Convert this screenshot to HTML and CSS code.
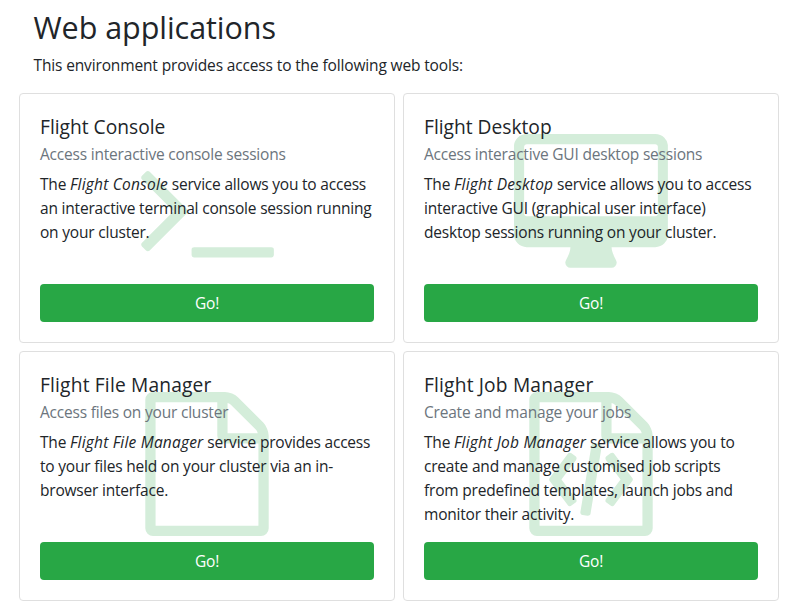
FILE: index.html
```html
<!DOCTYPE html>
<html lang="en">
<head>
<meta charset="utf-8">
<title>Web applications</title>
<link rel="stylesheet" href="styles.css">
</head>
<body>
<main class="page">
  <header class="intro">
    <h2 class="title">Web applications</h2>
    <p class="lead">This environment provides access to the following web tools:</p>
  </header>
  <div class="deck">
    <section class="card">
      <svg class="icon" viewBox="-64 0 1920 1792" aria-hidden="true"><path d="M649 983l-466 466q-10 10-23 10t-23-10l-50-50q-10-10-10-23t10-23l393-393-393-393q-10-10-10-23t10-23l50-50q10-10 23-10t23 10l466 466q10 10 10 23t-10 23zm1079 457v64q0 14-9 23t-23 9h-960q-14 0-23-9t-9-23v-64q0-14 9-23t23-9h960q14 0 23 9t9 23z"/></svg>
      <h5 class="name">Flight Console</h5>
      <h6 class="subtitle">Access interactive console sessions</h6>
      <p class="text">The <em>Flight Console</em> service allows you to access<br>an interactive terminal console session running<br>on your cluster.</p>
      <a class="btn">Go!</a>
    </section>
    <section class="card">
      <svg class="icon" viewBox="-64 0 1920 1792" aria-hidden="true"><path d="M1728 992v-832q0-13-9.500-22.500t-22.500-9.500h-1600q-13 0-22.500 9.500t-9.500 22.500v832q0 13 9.500 22.500t22.500 9.500h1600q13 0 22.500-9.500t9.500-22.500zm128-832v1088q0 66-47 113t-113 47h-544q0 37 16 77.500t32 71 16 43.500q0 26-19 45t-45 19h-512q-26 0-45-19t-19-45q0-14 16-44t32-70 16-78h-544q-66 0-113-47t-47-113v-1088q0-66 47-113t113-47h1600q66 0 113 47t47 113z"/></svg>
      <h5 class="name">Flight Desktop</h5>
      <h6 class="subtitle">Access interactive GUI desktop sessions</h6>
      <p class="text">The <em>Flight Desktop</em> service allows you to access<br>interactive GUI (graphical user interface)<br>desktop sessions running on your cluster.</p>
      <a class="btn">Go!</a>
    </section>
    <section class="card">
      <svg class="icon" viewBox="-64 0 1920 1792" aria-hidden="true"><path d="M1596 380q28 28 48 76t20 88v1152q0 40-28 68t-68 28h-1344q-40 0-68-28t-28-68v-1600q0-40 28-68t68-28h896q40 0 88 20t76 48zm-444-244v376h376q-10-29-22-41l-313-313q-12-12-41-22zm384 1528v-1024h-416q-40 0-68-28t-28-68v-416h-768v1536h1280z"/></svg>
      <h5 class="name wide">Flight File Manager</h5>
      <h6 class="subtitle">Access files on your cluster</h6>
      <p class="text">The <em>Flight File Manager</em> service provides access<br>to your files held on your cluster via an in-<br>browser interface.</p>
      <a class="btn">Go!</a>
    </section>
    <section class="card">
      <svg class="icon" viewBox="-64 0 1920 1792" aria-hidden="true"><path d="M1596 380q28 28 48 76t20 88v1152q0 40-28 68t-68 28h-1344q-40 0-68-28t-28-68v-1600q0-40 28-68t68-28h896q40 0 88 20t76 48zm-444-244v376h376q-10-29-22-41l-313-313q-12-12-41-22zm384 1528v-1024h-416q-40 0-68-28t-28-68v-416h-768v1536h1280zM608 768q8-11 21-12.500t24 6.500l51 38q11 8 12.500 21t-6.500 24l-182 243 182 243q8 11 6.500 24t-12.500 21l-51 38q-11 8-24 6.500t-21-12.500l-226-301q-14-19 0-38zM1410 1069q14 19 0 38l-226 301q-8 11-21 12.500t-24-6.500l-51-38q-11-8-12.500-21t6.500-24l182-243-182-243q-8-11-6.500-24t12.500-21l51-38q11-8 24-6.500t21 12.500zM790 1530q-13-2-20.500-13t-5.500-24l138-831q2-13 13-20.500t24-5.500l63 10q13 2 20.500 13t5.500 24l-138 831q-2 13-13 20.500t-24 5.500z"/></svg>
      <h5 class="name wide">Flight Job Manager</h5>
      <h6 class="subtitle">Create and manage your jobs</h6>
      <p class="text">The <em>Flight Job Manager</em> service allows you to<br>create and manage customised job scripts<br>from predefined templates, launch jobs and<br>monitor their activity.</p>
      <a class="btn">Go!</a>
    </section>
  </div>
</main>
</body>
</html>
```
FILE: styles.css
```css
* { box-sizing: border-box; }

body {
  margin: 0;
  background: #fff;
  color: #212529;
  font: 400 15.5px/24px "Segoe UI", "Open Sans", "Noto Sans", sans-serif;
  letter-spacing: -0.2px;
}

.page { padding: 8px 13px 0 19px; }

.intro { padding-left: 14.5px; }

.title {
  margin: 0 0 7px;
  font-size: 30.5px;
  font-weight: 400;
  line-height: 38px;
  letter-spacing: -0.05px;
}

.lead {
  margin: 0 0 16px;
  letter-spacing: -0.14px;
}

.deck {
  display: grid;
  grid-template-columns: 376px 376px;
  grid-auto-rows: 250px;
  gap: 8px;
}

.card {
  position: relative;
  display: flex;
  flex-direction: column;
  padding: 21px 20px 20px;
  border: 1px solid #dfdfdf;
  border-radius: 4px;
}

/* Watermark centred behind the card's text */
.icon {
  position: absolute;
  top: 39.5px;
  left: 50%;
  width: 154.28px;
  height: 144px;
  transform: translateX(-50%);
  fill: #d4edda;
}

.name, .subtitle, .text, .btn { position: relative; }

.name {
  margin: 0 0 6px;
  font-size: 19.2px;
  font-weight: 400;
  line-height: 24px;
  letter-spacing: 0;
}

.name.wide { letter-spacing: 0.17px; }

.subtitle {
  margin: 0 0 8px;
  color: #6c757d;
  font-size: 15.5px;
  font-weight: 400;
  line-height: 19px;
}

.text {
  margin: 0;
  line-height: 24px;
  white-space: nowrap;
}

.text em { letter-spacing: 0.2px; }

.btn {
  height: 38px;
  margin-top: auto;
  border-radius: 4px;
  background: #28a745;
  color: #fff;
  line-height: 38px;
  text-align: center;
}
```
